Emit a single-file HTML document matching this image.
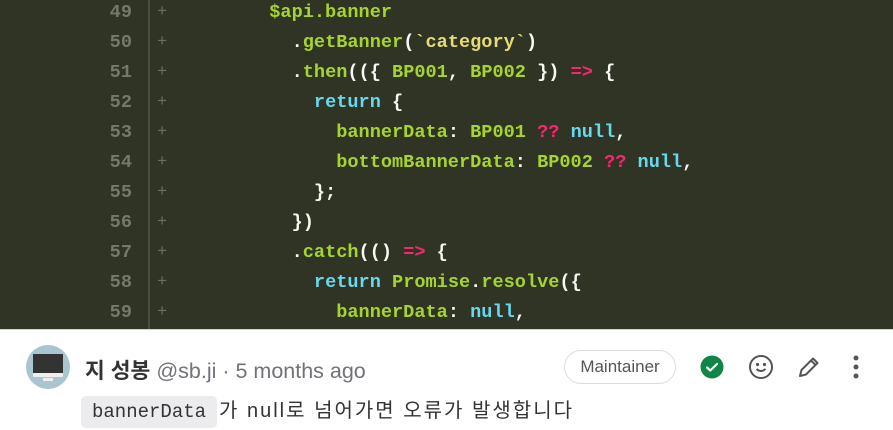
<!DOCTYPE html>
<html><head><meta charset="utf-8"><style>
body{margin:0;width:893px;height:430px;overflow:hidden;background:#fff;font-family:"Liberation Sans","Noto Sans CJK KR",sans-serif}
.code{position:absolute;left:0;top:0;width:893px;height:329px;background:#2f3424;border-bottom:1px solid #d0d0d0}
.gut{position:absolute;left:148px;top:0;width:2px;height:329px;background:#4a4e40}
.ln{position:absolute;height:30px;line-height:30px;font-family:"Liberation Mono",monospace;font-size:18.6px;white-space:pre;font-weight:bold}
.n{left:0;width:132px;text-align:right;color:#75786a}
.p{left:157px;color:#6a6e5c;font-size:17px;font-weight:normal}
.c{left:180px;color:#f8f8f2}
.g{color:#a6d42e}.b{color:#66d9ef}.r{color:#f92672}.y{color:#e6db74}
</style></head><body>
<div class="code"><div class="gut"></div>
<div class="ln n" style="top:-2px">49</div><div class="ln p" style="top:-2px">+</div><div class="ln c" style="top:-2px">        <span class="g">$api.banner</span></div>
<div class="ln n" style="top:28px">50</div><div class="ln p" style="top:28px">+</div><div class="ln c" style="top:28px">          .<span class="g">getBanner</span>(<span class="y">`category`</span>)</div>
<div class="ln n" style="top:58px">51</div><div class="ln p" style="top:58px">+</div><div class="ln c" style="top:58px">          .<span class="g">then</span>(({ <span class="g">BP001</span>, <span class="g">BP002</span> }) <span class="r">=&gt;</span> {</div>
<div class="ln n" style="top:88px">52</div><div class="ln p" style="top:88px">+</div><div class="ln c" style="top:88px">            <span class="b">return</span> {</div>
<div class="ln n" style="top:118px">53</div><div class="ln p" style="top:118px">+</div><div class="ln c" style="top:118px">              <span class="g">bannerData</span>: <span class="g">BP001</span> <span class="r">??</span> <span class="b">null</span>,</div>
<div class="ln n" style="top:148px">54</div><div class="ln p" style="top:148px">+</div><div class="ln c" style="top:148px">              <span class="g">bottomBannerData</span>: <span class="g">BP002</span> <span class="r">??</span> <span class="b">null</span>,</div>
<div class="ln n" style="top:178px">55</div><div class="ln p" style="top:178px">+</div><div class="ln c" style="top:178px">            };</div>
<div class="ln n" style="top:208px">56</div><div class="ln p" style="top:208px">+</div><div class="ln c" style="top:208px">          })</div>
<div class="ln n" style="top:238px">57</div><div class="ln p" style="top:238px">+</div><div class="ln c" style="top:238px">          .<span class="g">catch</span>(() <span class="r">=&gt;</span> {</div>
<div class="ln n" style="top:268px">58</div><div class="ln p" style="top:268px">+</div><div class="ln c" style="top:268px">            <span class="b">return</span> <span class="g">Promise</span>.<span class="g">resolve</span>({</div>
<div class="ln n" style="top:298px">59</div><div class="ln p" style="top:298px">+</div><div class="ln c" style="top:298px">              <span class="g">bannerData</span>: <span class="b">null</span>,</div>
</div>
<div style="position:absolute;left:26px;top:345px;width:44px;height:44px;border-radius:50%;background:#a9c6d0;overflow:hidden">
<div style="position:absolute;left:7px;top:9px;width:30px;height:19px;background:#333"></div>
<div style="position:absolute;left:7px;top:28px;width:30px;height:4px;background:#eee"></div>
<div style="position:absolute;left:17px;top:33px;width:10px;height:3px;background:#eee"></div>
</div>
<div style="position:absolute;left:85px;top:354px;font-size:21.5px;color:#333;white-space:nowrap"><b>지 성봉</b> <span style="color:#737278">@sb.ji · 5 months ago</span></div>
<div style="position:absolute;left:85px;top:394px;font-size:20px;letter-spacing:2px;color:#333;white-space:nowrap"><span style="font-family:'Liberation Mono',monospace;background:#ececef;border-radius:5px;padding:3px 11px 3px 11px;font-size:19px;letter-spacing:0;margin-right:2px;display:inline-block;line-height:26px;margin-left:-4px">bannerData</span>가 null로 넘어가면 오류가 발생합니다</div>
<div style="position:absolute;left:564px;top:350px;width:112px;height:34px;border:1px solid #dcdcde;border-radius:17px;box-sizing:border-box;text-align:center;line-height:32px;font-size:17px;color:#555">Maintainer</div>
<svg style="position:absolute;left:700px;top:355px" width="24" height="24"><circle cx="12" cy="12" r="11.5" fill="#108548"/><path d="M7 12.5l3.3 3L17 9" stroke="#fff" stroke-width="2.2" fill="none" stroke-linecap="round" stroke-linejoin="round"/></svg>
<svg style="position:absolute;left:748px;top:354px" width="26" height="26" fill="none" stroke="#555" stroke-width="2"><circle cx="13" cy="13" r="11"/><circle cx="9.5" cy="10.5" r=".6" fill="#555"/><circle cx="16.5" cy="10.5" r=".6" fill="#555"/><path d="M8.5 15q4.5 4 9 0"/></svg>
<svg style="position:absolute;left:796px;top:354px" width="26" height="26" fill="none" stroke="#555" stroke-width="2" stroke-linejoin="round"><path d="M4 22l1.5-6L17 4.5l4.5 4.5L10 20.5z M15 6.5l4.5 4.5"/></svg>
<svg style="position:absolute;left:850px;top:354px" width="12" height="26" fill="#555"><circle cx="6" cy="4" r="2.5"/><circle cx="6" cy="13" r="2.5"/><circle cx="6" cy="22" r="2.5"/></svg>
</body></html>
